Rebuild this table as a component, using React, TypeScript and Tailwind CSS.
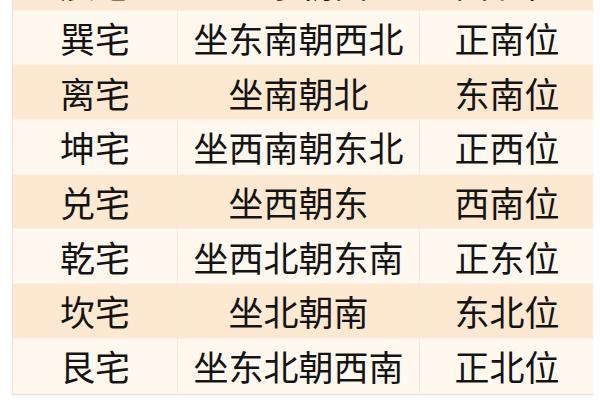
import React from 'react';

// 八宅 table — rows alternate peach / cream
type Row = { house: string; facing: string; spot: string };

const ROWS: Row[] = [
  { house: '震宅', facing: '坐东朝西', spot: '西北位' },
  { house: '巽宅', facing: '坐东南朝西北', spot: '正南位' },
  { house: '离宅', facing: '坐南朝北', spot: '东南位' },
  { house: '坤宅', facing: '坐西南朝东北', spot: '正西位' },
  { house: '兑宅', facing: '坐西朝东', spot: '西南位' },
  { house: '乾宅', facing: '坐西北朝东南', spot: '正东位' },
  { house: '坎宅', facing: '坐北朝南', spot: '东北位' },
  { house: '艮宅', facing: '坐东北朝西南', spot: '正北位' },
];

export default function App() {
  return (
    <div
      className="w-[600px] h-[400px] overflow-hidden bg-white pl-[12px]"
      style={{ fontFamily: '"Noto Sans CJK SC", "Noto Sans", sans-serif' }}
    >
      <div className="-mt-[44px] w-[581px] border-l border-b border-[#ece3da] shadow-[0_1px_2px_rgba(0,0,0,0.06)]">
        {ROWS.map((r, i) => (
          <div
            key={r.house}
            className={`grid grid-cols-[165px_242px_174px] h-[54.7px] border-b border-[#fbf0e6] text-[35px] leading-none text-[#141414] ${
              i % 2 === 0 ? 'bg-[#fde8d2]' : 'bg-[#fff8ef]'
            }`}
          >
            <div className="flex items-center justify-center border-r border-[#f6e8da]">{r.house}</div>
            <div className="flex items-center justify-center border-r border-[#f6e8da]">{r.facing}</div>
            <div className="flex items-center justify-center">{r.spot}</div>
          </div>
        ))}
      </div>
    </div>
  );
}
